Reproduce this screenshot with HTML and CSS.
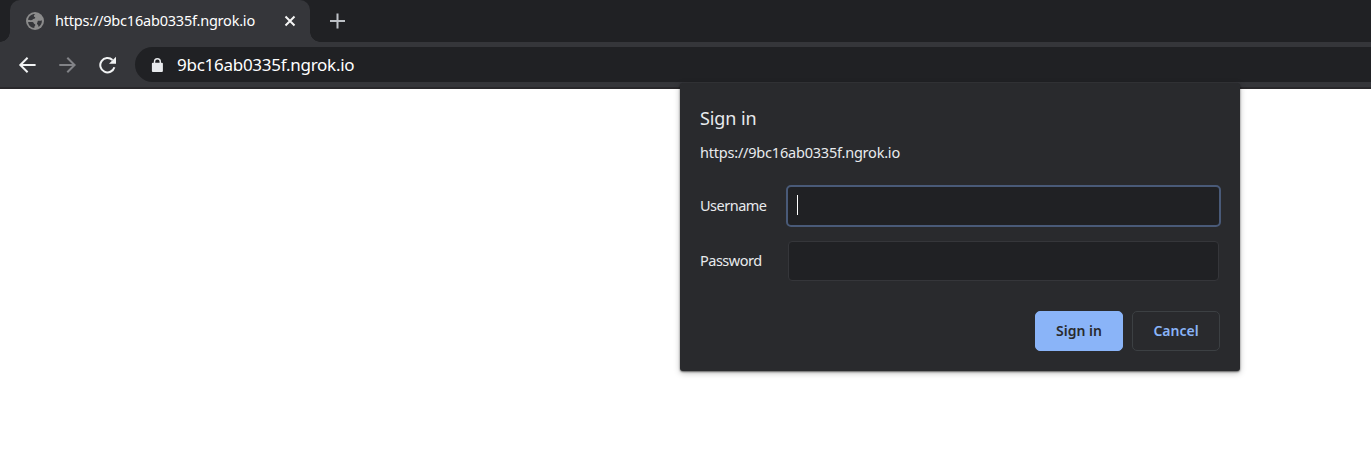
FILE: index.html
```html
<!DOCTYPE html>
<html lang="en">
<head>
<meta charset="utf-8">
<title>9bc16ab0335f.ngrok.io</title>
<link rel="stylesheet" href="styles.css">
</head>
<body>
<header class="browser">
  <div class="tabstrip">
    <div class="tab">
      <svg class="globe" width="18" height="18" viewBox="0 0 18 18"><circle cx="9" cy="9" r="9" fill="#8b8b8b"/><path d="M9.3 1.9C8.2 2.7 7.6 3.4 7.9 4.2c.3.8 1.2.5 1.3 1.3.1 1-.8 1.4-1.8 1.4-.9 0-.8.9-1.5 1.2-.8.4-1.8-.1-3.9-.3C2.5 4.5 5.3 1.8 9.3 1.9ZM2.1 10.1h4.2c1.5 0 1.2 1.5 2.2 1.9.9.4 1.1 1 .5 1.7-.6.6-.7 1.3-.7 2.4-3.4-.3-5.9-2.7-6.2-6ZM15.9 8.3c.2 2.8-1 5.2-3.2 6.6-.4-.7-.3-1.8-1.2-2.3-.7-.5-.7-1.4-.1-2 .5-.6-.2-1.3.7-1.8.9-.4 2.1.6 3.8-.5Z" fill="#35363a"/></svg>
      <span class="tab-title">https://9bc16ab0335f.ngrok.io</span>
      <svg class="tab-close" width="12" height="12" viewBox="0 0 12 12"><path d="m1.5 1.5 9 9m0-9-9 9" stroke="#f5f5f5" stroke-width="2"/></svg>
    </div>
    <svg class="new-tab" width="16" height="16" viewBox="0 0 16 16"><path d="M8.5 .5v15M1 8h15" stroke="#bdc1c6" stroke-width="2"/></svg>
  </div>
  <div class="toolbar">
    <svg class="nav" width="18" height="18" viewBox="0 0 18 18" fill="none" stroke="#f1f3f4" stroke-width="2"><path d="M17.6 9H2.9M9.6 1.7 2.3 9l7.3 7.3"/></svg>
    <svg class="nav" width="18" height="18" viewBox="0 0 18 18" fill="none" stroke="#828387" stroke-width="2"><path d="M1.3 9H16M9.3 1.7 16.6 9l-7.3 7.3"/></svg>
    <svg class="nav" width="18" height="18" viewBox="0 0 18 18"><path d="M16.4 11.2A7.2 7.2 0 1 1 14.5 4" fill="none" stroke="#f1f3f4" stroke-width="2"/><path d="M18 .8v7h-7Z" fill="#f1f3f4"/></svg>
    <div class="address">
      <svg width="12" height="14" viewBox="0 0 12 14"><rect x=".9" y="4.7" width="11" height="9.3" rx="1" fill="#e8eaed"/><path d="M3.5 5.5V3.7a2.9 2.9 0 0 1 5.8 0v1.8" fill="none" stroke="#e8eaed" stroke-width="1.4"/></svg>
      <span class="url">9bc16ab0335f.ngrok.io</span>
    </div>
  </div>
</header>
<form class="dialog">
  <h1 class="heading">Sign in</h1>
  <p class="origin">https://9bc16ab0335f.ngrok.io</p>
  <div class="row">
    <label class="label">Username</label>
    <div class="field focused"><span class="caret"></span></div>
  </div>
  <div class="row">
    <label class="label">Password</label>
    <div class="field"></div>
  </div>
  <div class="actions">
    <button type="button" class="button primary"><span>Sign in</span></button>
    <button type="button" class="button"><span>Cancel</span></button>
  </div>
</form>
</body>
</html>
```
FILE: styles.css
```css
* { box-sizing: border-box; }
body {
  margin: 0;
  height: 454px;
  overflow: hidden;
  background: #fff;
  color: #e8eaed;
  font: 14.5px/20px "Noto Sans", "Open Sans", sans-serif;
}
svg { display: block; flex: none; }
span, label, h1, p { white-space: nowrap; }
.browser { height: 89px; background: #35363a; border-bottom: 2px solid #29282b; }
.tabstrip { display: flex; align-items: center; height: 42px; padding-left: 10px; background: #202124; }
.tab {
  position: relative;
  display: flex;
  align-items: center;
  width: 300px;
  height: 42px;
  padding: 0 14px 0 16px;
  border-radius: 10px 10px 0 0;
  background: #35363a;
}
.tab::before, .tab::after {
  content: "";
  position: absolute;
  bottom: 0;
  width: 10px;
  height: 10px;
}
.tab::before { left: -10px; background: radial-gradient(circle at 0 0, #202124 9.5px, #35363a 10px); }
.tab::after { right: -10px; background: radial-gradient(circle at 100% 0, #202124 9.5px, #35363a 10px); }
.tab-title { margin-left: 11px; padding-bottom: 2px; color: #fff; letter-spacing: -0.21px; }
.tab-close { margin-left: auto; }
.new-tab { margin-left: 19px; }
.toolbar { display: flex; align-items: center; height: 45px; padding-left: 18px; }
.nav { margin-right: 22px; }
.nav:nth-child(3) { margin-right: 19px; }
.address {
  display: flex;
  flex: 1;
  align-items: center;
  height: 35px;
  padding-left: 16px;
  border-radius: 18px 0 0 18px;
  background: #202124;
}
.url { margin-left: 14px; font-size: 17px; line-height: 24px; color: #fff; letter-spacing: -0.27px; }
.dialog {
  position: absolute;
  left: 680px;
  top: 83px;
  width: 560px;
  height: 288px;
  padding: 22px 20px 20px;
  border-radius: 3px;
  background: #292a2d;
  box-shadow: 0 1px 2px rgba(0,0,0,.55), 0 2px 6px rgba(0,0,0,.25);
}
.heading { width: max-content; margin: 0; font-size: 18px; font-weight: 400; line-height: 26px; letter-spacing: -0.1px; }
.origin { width: max-content; margin: 11px 0 23px; line-height: 20px; letter-spacing: -0.21px; }
.row { display: flex; align-items: center; height: 42px; margin-bottom: 13px; }
.label { padding-bottom: 2px; letter-spacing: -0.5px; }
.field {
  width: 431px;
  height: 40px;
  margin: 0 1px 0 auto;
  border: 1px solid #35363a;
  border-radius: 4px;
  background: #202124;
}
.focused { width: 435px; height: 42px; margin-right: -1px; padding: 8px 0 0 9px; border: 2px solid #495a78; border-radius: 5px; }
.caret { display: block; width: 1px; height: 20px; background: #fff; }
.actions { display: flex; justify-content: flex-end; gap: 9px; margin-top: 29px; }
.button {
  display: flex;
  align-items: center;
  justify-content: center;
  width: 88px;
  height: 40px;
  padding: 0;
  border: 1px solid #3c4043;
  border-radius: 5px;
  background: #292a2d;
  color: #8ab4f8;
  font: 600 14px/20px "Noto Sans", "Open Sans", sans-serif;
}
.primary { border-color: #8ab4f8; background: #8ab4f8; color: #292a2d; }
```
